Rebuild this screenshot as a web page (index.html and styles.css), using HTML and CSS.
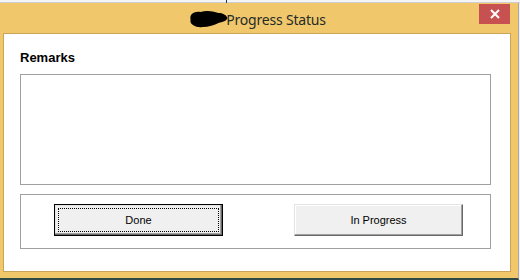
FILE: index.html
```html
<!DOCTYPE html>
<html lang="en">
<head>
    <meta charset="UTF-8">
    <title>Progress Status</title>
    <link rel="stylesheet" href="styles.css">
</head>
<body>
    <div class="topstrip"><span class="tick"></span></div>
    <div class="window">
        <div class="titlebar">
            <svg class="redact" width="41" height="18" viewBox="0 0 40 18">
                <path d="M2 9 C1 4 6 1 12 2 C18 0 24 1 30 3 C34 3 38 5 39 8 C38 11 34 12 30 13 C26 15 20 17 14 17 C8 18 3 15 2 12 Z" fill="#000"/>
            </svg>
            <span class="title">Progress Status</span>
            <button class="close" type="button">
                <svg width="10" height="10" viewBox="0 0 10 10">
                    <path d="M1 1 L9 9 M9 1 L1 9" stroke="#fff" stroke-width="2"/>
                </svg>
            </button>
        </div>
        <div class="content">
            <h2 class="label">Remarks</h2>
            <div class="remarks"></div>
            <div class="actions">
                <button class="btn btn-default" type="button">Done</button>
                <button class="btn" type="button">In Progress</button>
            </div>
        </div>
    </div>
</body>
</html>
```

FILE: styles.css
```css
body {
    margin: 0;
    padding: 0;
    width: 520px;
    height: 280px;
    overflow: hidden;
    background: #f0f0f0;
    font-family: "Liberation Sans", Arial, sans-serif;
}
.topstrip {
    height: 2px;
    background: #f4f4f4;
    border-bottom: 1px solid #cfcfcf;
}
.tick {
    display: block;
    margin-left: 226px;
    width: 1px;
    height: 3px;
    background: #1c3b5a;
}
.window {
    width: 519px;
    height: 277px;
    box-sizing: border-box;
    background: #f0c86b;
    border-right: 1px solid #a8a8a8;
    border-bottom: 2px solid #2f4a44;
    padding: 0 7px 6px 3px;
    display: flex;
    flex-direction: column;
}
.titlebar {
    height: 30px;
    display: flex;
    align-items: center;
    justify-content: center;
    position: relative;
}
.redact {
    margin-right: -3px;
    margin-top: 1px;
}
.title {
    font-family: "Noto Sans", "Open Sans", sans-serif;
    font-size: 14px;
    letter-spacing: -0.2px;
    color: #262b2a;
    margin-top: 2px;
}
.close {
    position: absolute;
    top: 1px;
    right: 1px;
    width: 31px;
    height: 20px;
    border: none;
    padding: 0;
    background: #c75050;
    display: flex;
    align-items: center;
    justify-content: center;
}
.content {
    flex: 1;
    background: #fff;
    border: 1px solid #c9a458;
    padding: 16px 19px 0 16px;
}
.label {
    margin: 0 0 9px;
    font-size: 13px;
    line-height: 15px;
    font-weight: bold;
    color: #000;
}
.remarks {
    height: 109px;
    border: 1px solid #a0a0a0;
}
.actions {
    margin-top: 9px;
    height: 55px;
    box-sizing: border-box;
    border: 1px solid #a0a0a0;
    padding: 9px 0 0 33px;
    display: flex;
    gap: 71px;
    align-items: flex-start;
}
.btn {
    width: 169px;
    height: 32px;
    box-sizing: border-box;
    background: #f0f0f0;
    font-family: "Liberation Sans", Tahoma, sans-serif;
    font-size: 11px;
    color: #000;
    border: 1px solid;
    border-color: #e3e3e3 #696969 #696969 #e3e3e3;
    box-shadow: inset -1px -1px 0 #a0a0a0, inset 1px 1px 0 #fff;
    padding: 0;
}
.btn-default {
    border-color: #000;
    box-shadow: inset -1px -1px 0 #696969, inset -2px -2px 0 #a0a0a0, inset 1px 1px 0 #e3e3e3;
    outline: 1px dotted #000;
    outline-offset: -5px;
}
```
